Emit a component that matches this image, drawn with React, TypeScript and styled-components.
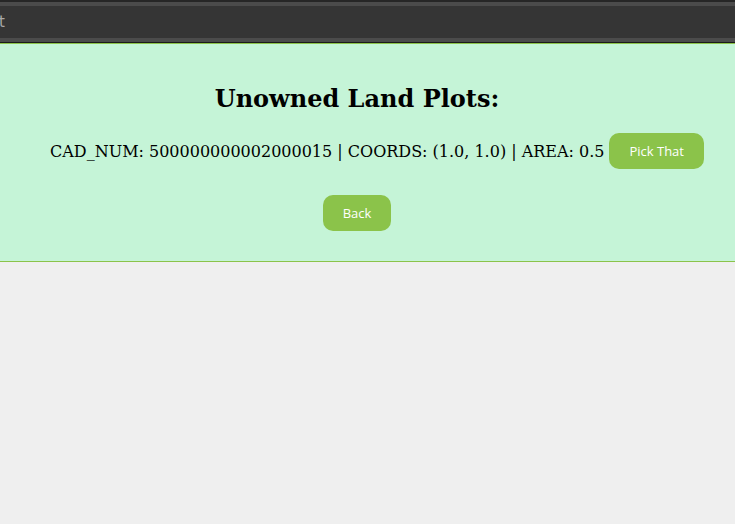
import React from "react";
import styled, { createGlobalStyle } from "styled-components";

const GlobalStyle = createGlobalStyle`
  html, body {
    margin: 0;
    padding: 0;
    background: #efefef;
    font-family: "DejaVu Serif", serif;
    color: #000;
  }
`;

const TopBar = styled.header`
  background: #262626;
  padding-top: 2px;
  border-bottom: 1px solid #1c1c1c;
`;

const Field = styled.div`
  height: 32px;
  background: #353535;
  border-top: 4px solid #4b4b4b;
  border-bottom: 4px solid #4b4b4b;
  display: flex;
  align-items: center;
  overflow: hidden;
`;

const FieldText = styled.span`
  font-family: "DejaVu Sans", sans-serif;
  font-size: 15px;
  color: #a8a8a8;
  margin-left: -1px;
`;

const Panel = styled.section`
  background: #c5f4d7;
  border-top: 1px solid #8bc34a;
  border-bottom: 1px solid #8bc34a;
  box-shadow: 0 3px 6px rgba(0, 0, 0, 0.06);
  padding: 41px 21px 30px 0;
  display: flex;
  flex-direction: column;
  align-items: center;
`;

const Title = styled.h2`
  margin: 0;
  font-size: 24px;
  line-height: 28px;
  font-weight: bold;
`;

const List = styled.div`
  margin: 20px 0 0 40px;
  display: flex;
  flex-direction: column;
  align-items: center;
`;

const Row = styled.div`
  display: flex;
  align-items: center;
  gap: 5px;
  font-size: 16px;
  white-space: nowrap;
`;

const Button = styled.button<{ $mt?: number }>`
  margin-top: ${(p) => p.$mt ?? 0}px;
  height: 36px;
  padding: 0 20px;
  border: none;
  border-radius: 10px;
  background: #8bc34a;
  color: #fff;
  font-family: "Open Sans", sans-serif;
  font-size: 13px;
  cursor: pointer;
`;

export default function App() {
  return (
    <>
      <GlobalStyle />
      <TopBar>
        <Field>
          <FieldText>t</FieldText>
        </Field>
      </TopBar>
      <Panel>
        <Title>Unowned Land Plots:</Title>
        <List>
          <Row>
            <span>CAD_NUM: 500000000002000015 | COORDS: (1.0, 1.0) | AREA: 0.5</span>
            <Button>Pick That</Button>
          </Row>
        </List>
        <Button $mt={26}>Back</Button>
      </Panel>
    </>
  );
}
